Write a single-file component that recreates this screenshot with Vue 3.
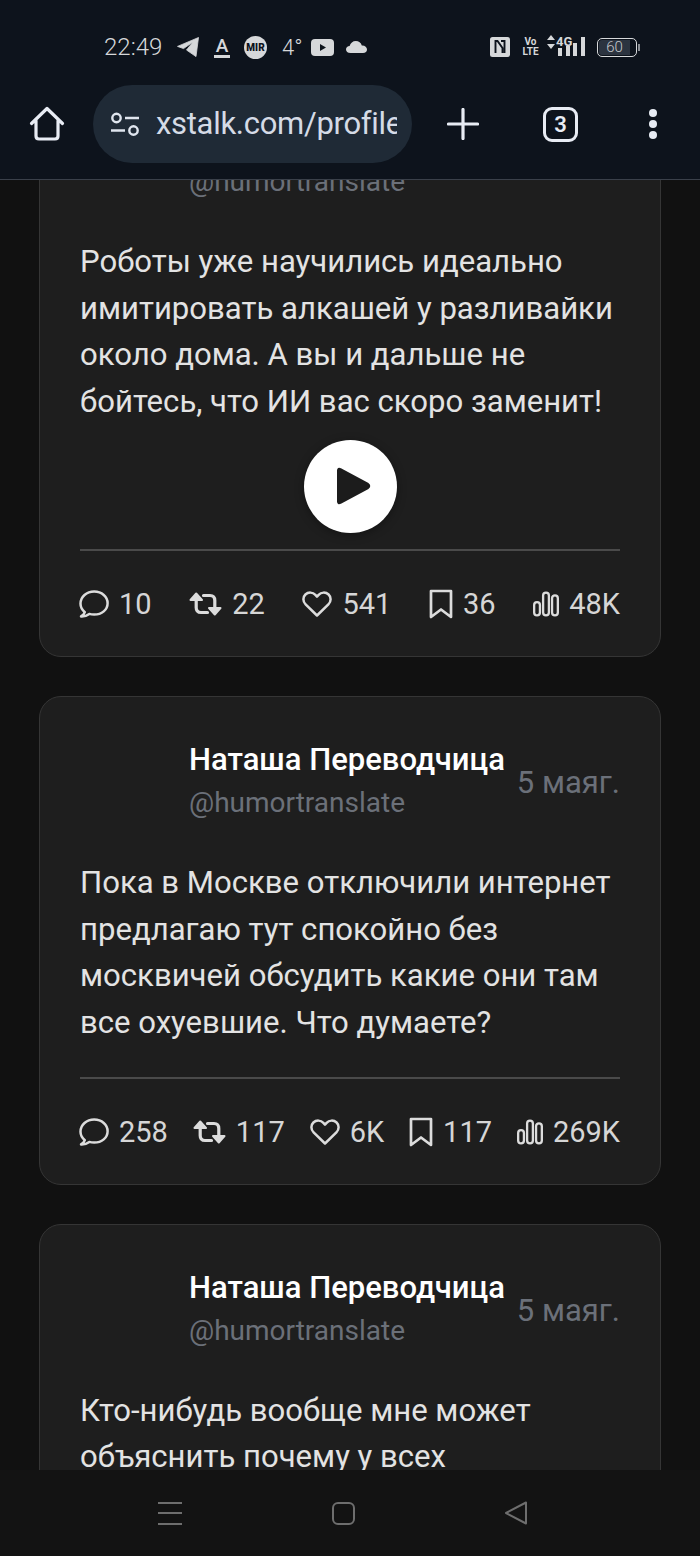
<template>
  <div class="screen">
    <header class="chrome">
      <div class="status">
        <div class="status-left">
          <span class="clock">22:49</span>
          <svg class="ic-tg" viewBox="0 0 22 20"><path d="M21.5 0.5 L0.5 9.4 L6.5 11.6 L16 5 L9.5 13 L19 19.6 Z" fill="#d6d8da" stroke="#d6d8da" stroke-width="0.8" stroke-linejoin="round"/></svg>
          <span class="app-a">A</span>
          <span class="mir">MIR</span>
          <span class="temp">4°</span>
          <svg class="ic-yt" viewBox="0 0 23 17"><rect width="23" height="17" rx="4" fill="#d6d8da"/><path d="M9 5 L15 8.5 L9 12 Z" fill="#0d131c"/></svg>
          <svg class="ic-cloud" viewBox="0 0 21 12"><path d="M4.5 12 C1.5 12 0 10.2 0 8.4 C0 6.4 1.6 5 3.6 5 C4.4 2 6.8 0 9.8 0 C12.8 0 15 1.8 15.8 4.4 C18.8 4.2 21 6 21 8.4 C21 10.4 19.6 12 17 12 Z" fill="#d6d8da"/></svg>
        </div>
        <div class="status-right">
          <svg class="ic-nfc" viewBox="0 0 20 20"><rect width="20" height="20" rx="2.5" fill="#d6d8da"/><path d="M5.5 16 V4 H7.5 L12.5 11 V16 M14.5 16 V4 H11" fill="none" stroke="#0d131c" stroke-width="1.9"/></svg>
          <span class="volte"><i>Vo</i><i>LTE</i></span>
          <svg class="ic-updown" viewBox="0 0 8 14"><path d="M4 0 L8 5 H0 Z M4 14 L0 9 H8 Z" fill="#d6d8da"/></svg>
          <div class="net">
            <span class="net-label">4G</span>
            <div class="bars"><i class="b1"></i><i class="b2"></i><i class="b3"></i><i class="b4"></i></div>
          </div>
          <div class="battery"><span class="battery-body">60</span><i class="battery-cap"></i></div>
        </div>
      </div>
      <div class="toolbar">
        <svg class="ic-home" viewBox="0 0 36 36"><path d="M2.5 17.5 L18 2.5 L33.5 17.5 M7 14.5 V30 Q7 33 10 33 H26 Q29 33 29 30 V14.5" fill="none" stroke="#e8ecf4" stroke-width="3.2" stroke-linecap="round" stroke-linejoin="round"/></svg>
        <div class="pill">
          <svg class="ic-tune" viewBox="0 0 30 24"><circle cx="6.5" cy="6" r="4.2" fill="none" stroke="#dfe5ee" stroke-width="2.4"/><path d="M15 6 H29 M1 18.5 H15" stroke="#dfe5ee" stroke-width="2.4"/><circle cx="23.5" cy="18.5" r="4.2" fill="none" stroke="#dfe5ee" stroke-width="2.4"/></svg>
          <span class="url">xstalk.com/profile</span>
        </div>
        <svg class="ic-plus" viewBox="0 0 32 32"><path d="M16 1.5 V30.5 M1.5 16 H30.5" stroke="#e8ecf4" stroke-width="3.2" stroke-linecap="round"/></svg>
        <span class="tabs">3</span>
        <div class="dots"><i></i><i></i><i></i></div>
      </div>
    </header>

    <main class="feed">
      <article v-for="post in posts" :key="post.id" class="card">
        <div class="card-head">
          <div class="avatar"></div>
          <div class="who">
            <div class="name">Наташа Переводчица</div>
            <div class="handle">@humortranslate</div>
          </div>
          <div class="date">5 маяг.</div>
        </div>
        <p class="text">
          <span v-for="line in post.lines" :key="line" class="line">{{ line }}</span>
        </p>
        <div v-if="post.video" class="play">
          <svg viewBox="0 0 36 38"><path d="M3 3.5 Q3 1 5.5 2.2 L33 17 Q35.5 19 33 21 L5.5 35.8 Q3 37 3 34.5 Z" fill="#1c1c1c" stroke="#1c1c1c" stroke-width="2" stroke-linejoin="round"/></svg>
        </div>
        <template v-if="post.stats">
          <div class="rule"></div>
          <div class="stats">
            <span class="stat">
              <svg class="ic ic-bubble" viewBox="0 0 30 28"><path d="M5.8 22.2 C3.2 20 1.5 17.2 1.5 13.8 C1.5 6.8 7.6 1.5 15.2 1.5 C22.8 1.5 28.6 6.8 28.6 13.2 C28.6 19.8 22.8 24.6 15.2 24.6 C13.4 24.6 11.8 24.4 10.3 23.9 C8 25.6 5 26.6 2 26.4 C3.8 25.4 5.2 24 5.8 22.2 Z" fill="none" stroke="#dcdcdc" stroke-width="2.5" stroke-linejoin="round"/></svg>
              {{ post.stats[0] }}
            </span>
            <span class="stat">
              <svg class="ic ic-rt" viewBox="0 0 33 24"><path d="M7.2 4 V15.5 Q7.2 20.5 12 20.5 H18.5" fill="none" stroke="#dcdcdc" stroke-width="3.2" stroke-linecap="round"/><path d="M1.5 8 L7.2 1.5 L13 8 Z" fill="#dcdcdc" stroke="#dcdcdc" stroke-width="2" stroke-linejoin="round"/><path d="M25.8 20 V8.5 Q25.8 3.5 21 3.5 H14.5" fill="none" stroke="#dcdcdc" stroke-width="3.2" stroke-linecap="round"/><path d="M20 16 L25.8 22.5 L31.5 16 Z" fill="#dcdcdc" stroke="#dcdcdc" stroke-width="2" stroke-linejoin="round"/></svg>
              {{ post.stats[1] }}
            </span>
            <span class="stat">
              <svg class="ic" viewBox="0 0 30 26"><path d="M15 24.5 L3.6 13.4 C0.6 10.4 0.8 6 3.4 3.5 C6.2 0.9 10.8 1 13.4 3.8 L15 5.6 L16.6 3.8 C19.2 1 23.8 0.9 26.6 3.5 C29.2 6 29.4 10.4 26.4 13.4 Z" fill="none" stroke="#dcdcdc" stroke-width="2.5" stroke-linejoin="round"/></svg>
              {{ post.stats[2] }}
            </span>
            <span class="stat">
              <svg class="ic ic-mark" viewBox="0 0 24 30"><path d="M2 2 H22 V28 L12 20.5 L2 28 Z" fill="none" stroke="#dcdcdc" stroke-width="2.7" stroke-linejoin="round"/></svg>
              {{ post.stats[3] }}
            </span>
            <span class="stat">
              <svg class="ic ic-bars" viewBox="0 0 27 26"><rect x="1.2" y="11" width="6" height="13.8" rx="3" fill="none" stroke="#dcdcdc" stroke-width="2.4"/><rect x="10.5" y="1.2" width="6" height="23.6" rx="3" fill="none" stroke="#dcdcdc" stroke-width="2.4"/><rect x="19.8" y="4" width="6" height="20.8" rx="3" fill="none" stroke="#dcdcdc" stroke-width="2.4"/></svg>
              {{ post.stats[4] }}
            </span>
          </div>
        </template>
      </article>
    </main>

    <footer class="navbar">
      <div class="nav-menu"><i></i><i></i><i></i></div>
      <div class="nav-home"></div>
      <svg class="nav-back" viewBox="0 0 24 24"><path d="M2 12 L22 1.5 V22.5 Z" fill="none" stroke="#6e6e6e" stroke-width="2" stroke-linejoin="round"/></svg>
    </footer>
  </div>
</template>

<script setup>
const posts = [
  {
    id: 1,
    video: true,
    lines: [
      'Роботы уже научились идеально',
      'имитировать алкашей у разливайки',
      'около дома. А вы и дальше не',
      'бойтесь, что ИИ вас скоро заменит!',
    ],
    stats: ['10', '22', '541', '36', '48K'],
  },
  {
    id: 2,
    lines: [
      'Пока в Москве отключили интернет',
      'предлагаю тут спокойно без',
      'москвичей обсудить какие они там',
      'все охуевшие. Что думаете?',
    ],
    stats: ['258', '117', '6K', '117', '269K'],
  },
  {
    id: 3,
    lines: [
      'Кто-нибудь вообще мне может',
      'объяснить почему у всех',
    ],
  },
]
</script>

<style>
html, body { margin: 0; background: #111; }
</style>

<style scoped>
.screen {
  width: 700px; height: 1556px;
  display: flex; flex-direction: column;
  overflow: hidden;
  background: #111;
  font-family: Roboto, "Noto Sans", sans-serif;
}

/* верхняя панель браузера */
.chrome {
  position: relative; z-index: 2;
  flex: 0 0 180px; box-sizing: border-box;
  background: #0d131c;
  border-bottom: 1px solid #3a404a;
}
.status {
  height: 85px; box-sizing: border-box;
  padding: 9px 60px 0 104px;
  display: flex; align-items: center; justify-content: space-between;
  color: #d6d8da;
}
.status-left, .status-right { display: flex; align-items: center; }
.clock { font-size: 24px; width: 57px; font-weight: 300; }
.ic-tg { width: 22px; height: 20px; margin-left: 16px; }
.app-a {
  margin-left: 15px; width: 16px; box-sizing: border-box;
  font-size: 19px; line-height: 18px; font-weight: 500; text-align: center;
  border-bottom: 3px solid #d6d8da;
}
.mir {
  margin-left: 14px; width: 23px; height: 23px; border-radius: 50%;
  background: #d6d8da; color: #0d131c;
  font-size: 10px; font-weight: 900; line-height: 23px; text-align: center;
}
.temp { margin-left: 15px; font-size: 22px; width: 18px; font-weight: 300; }
.ic-yt { width: 23px; height: 17px; margin-left: 11px; }
.ic-cloud { width: 21px; height: 12px; margin-left: 12px; }

.ic-nfc { width: 20px; height: 20px; }
.volte {
  margin-left: 13px; width: 15px;
  display: flex; flex-direction: column; align-items: center;
  font-size: 10px; line-height: 10px; font-weight: 700;
}
.volte i { font-style: normal; }
.ic-updown { width: 8px; height: 14px; margin-left: 9px; margin-top: -10px; }
.net { margin-left: 1px; width: 30px; position: relative; height: 24px; }
.net-label { font-size: 13px; line-height: 13px; font-weight: 700; display: block; }
.bars { display: flex; align-items: flex-end; gap: 3.5px; position: absolute; left: 2px; bottom: 3px; }
.bars i { width: 4px; background: #d6d8da; display: block; }
.b1 { height: 8px; } .b2 { height: 10px; } .b3 { height: 13px; } .b4 { height: 19px; }
.battery { margin-left: 11px; display: flex; align-items: center; }
.battery-body {
  width: 40px; height: 19px; box-sizing: border-box;
  border: 1.5px solid #d6d8da; border-radius: 5px;
  background: #2c3440; background-clip: content-box; padding: 1px 6px 1px 1px;
  color: #c4c8cc;
  font-size: 15px; line-height: 14px; text-align: center; font-weight: 300;
}
.battery-cap { width: 2px; height: 7px; background: #8a8e94; margin-left: 1px; }

.toolbar {
  height: 78px; display: flex; align-items: center;
  padding: 0 44px 0 29px;
}
.ic-home { width: 36px; height: 36px; flex: none; }
.pill {
  width: 319px; height: 78px; margin-left: 28px; flex: none;
  box-sizing: border-box; padding: 0 15px 0 17px;
  border-radius: 39px; background: #1f2a36;
  display: flex; align-items: center;
}
.ic-tune { width: 30px; height: 24px; flex: none; }
.url {
  margin-left: 16px; flex: 1; min-width: 0;
  font-size: 31px; letter-spacing: -0.3px; line-height: 40px; margin-top: -1px;
  color: #d5dbe6; white-space: nowrap; overflow: hidden;
}
.ic-plus { width: 32px; height: 32px; margin-left: 35px; flex: none; }
.tabs {
  margin-left: 64px; width: 35px; height: 35px; flex: none; box-sizing: border-box;
  border: 3px solid #e8ecf4; border-radius: 9px;
  color: #e8ecf4; font-size: 22px; font-weight: 600; line-height: 29px; text-align: center;
}
.dots { margin-left: 71px; display: flex; flex-direction: column; gap: 3px; }
.dots i { display: block; width: 8px; height: 8px; border-radius: 50%; background: #e8ecf4; }

/* лента */
.feed {
  flex: 1; min-height: 0; overflow: hidden;
  padding: 0 39px;
  display: flex; flex-direction: column; gap: 39px;
}
.card {
  flex: none; box-sizing: border-box;
  background: #1e1e1e;
  border: 1px solid #353535; border-radius: 22px;
  padding: 39px 40px 35px;
}
.card:first-child { margin-top: -105px; }
.card-head { display: flex; align-items: center; }
.avatar { width: 93px; height: 86px; margin-right: 16px; flex: none; }
.who { flex: none; }
.name { font-size: 31px; line-height: 48px; font-weight: 500; color: #fff; white-space: nowrap; }
.handle { font-size: 28px; line-height: 38px; color: #6b7079; }
.date { margin-left: auto; margin-top: 8px; font-size: 31px; color: #6b7079; white-space: nowrap; }
.text { margin: 38px 0 0; font-size: 31.1px; line-height: 46.7px; color: #e3e3e3; }
.line { display: block; white-space: nowrap; }
.play {
  width: 93px; height: 93px; margin: 14px auto -14px; border-radius: 50%;
  background: #fff;
  display: flex; align-items: center; justify-content: center;
  box-shadow: 0 2px 10px rgba(0, 0, 0, 0.35);
}
.play svg { width: 36px; height: 38px; margin-left: 5px; }
.rule { height: 2px; background: #4a4a4a; margin-top: 30px; }
.stats {
  margin-top: 36px; height: 34px;
  display: flex; align-items: center; justify-content: space-between;
}
.stat {
  display: flex; align-items: center; gap: 10px;
  font-size: 29px; line-height: 34px; color: #d6d6d6; white-space: nowrap;
}
.ic { width: 30px; height: 28px; flex: none; }
.ic-bubble { width: 30px; height: 28px; margin-left: -1px; }
.ic-rt { width: 33px; height: 24px; }
.ic-mark { width: 24px; height: 30px; }
.ic-bars { width: 26px; height: 26px; }

/* системная навигация */
.navbar {
  flex: 0 0 86px; background: #131313;
  position: relative; z-index: 2;
  display: flex; align-items: center;
  padding: 0 172px 0 158px; justify-content: space-between;
}
.nav-menu { display: flex; flex-direction: column; gap: 8.5px; }
.nav-menu i { display: block; width: 24px; height: 2px; background: #6e6e6e; }
.nav-home { width: 19px; height: 19px; border: 2px solid #6e6e6e; border-radius: 6px; }
.nav-back { width: 24px; height: 24px; }
</style>
